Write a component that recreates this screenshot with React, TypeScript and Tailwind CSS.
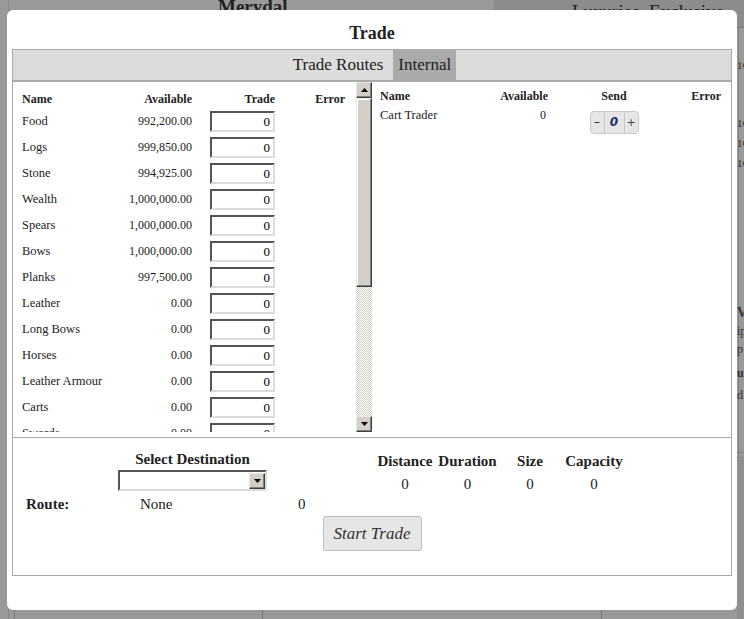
const leftRows: [string, string][] = [
  ["Food", "992,200.00"],
  ["Logs", "999,850.00"],
  ["Stone", "994,925.00"],
  ["Wealth", "1,000,000.00"],
  ["Spears", "1,000,000.00"],
  ["Bows", "1,000,000.00"],
  ["Planks", "997,500.00"],
  ["Leather", "0.00"],
  ["Long Bows", "0.00"],
  ["Horses", "0.00"],
  ["Leather Armour", "0.00"],
  ["Carts", "0.00"],
  ["Swords", "0.00"],
];

function Arrow({ up }: { up?: boolean }) {
  return (
    <svg width="7" height="4" viewBox="0 0 7 4">
      <path d={up ? "M3.5 0L7 4H0Z" : "M0 0H7L3.5 4Z"} fill="#000" />
    </svg>
  );
}

function ScrollButton({ up }: { up?: boolean }) {
  return (
    <div className="w-[16px] h-[16px] shrink-0 bg-[#d4d0c8] border border-t-[#e8e8e8] border-l-[#e8e8e8] border-r-[#404040] border-b-[#404040] shadow-[inset_-1px_-1px_#808080] flex items-center justify-center">
      <Arrow up={up} />
    </div>
  );
}

function TradeInput() {
  return (
    <div className="w-[65px] h-[21px] bg-white border-2 border-t-[#555] border-l-[#555] border-b-[#dcdcdc] border-r-[#dcdcdc] text-right pr-[3px] text-[13px] leading-[17px] text-black">
      0
    </div>
  );
}

export default function App() {
  return (
    <div className="relative w-[744px] h-[619px] overflow-hidden bg-[#999] font-['Liberation_Serif',serif] text-[#222]">
      {/* page behind the dialog */}
      <div className="absolute left-[494px] top-0 w-[250px] h-[28px] bg-[#8c8c8c] border-b border-[#777]" />
      <div className="absolute left-[8px] top-0 w-px h-[619px] bg-[#888]" />
      <div className="absolute left-[218px] top-[-3px] text-[19px] leading-[19px] font-bold">Merydal</div>
      <div className="absolute left-[572px] top-[2px] text-[19px] leading-[19px]">Luxuries &nbsp;Exclusive</div>
      <div className="absolute left-[738px] top-[28px] w-px h-[430px] bg-[#808080]" />
      <div className="absolute left-[737px] top-[55px] text-[11px] leading-[20px] text-[#333]">
        <div>1C</div>
        <div className="mt-[38px]">1C</div>
        <div>1C</div>
        <div>1C</div>
      </div>
      <div className="absolute left-[737px] top-[304px] text-[12px] leading-[18px] text-[#333]">
        <div className="font-bold text-[14px]">V</div>
        <div>ip</div>
        <div>p</div>
        <div className="font-bold mt-[6px]">u</div>
        <div className="mt-[4px]">d</div>
      </div>
      <div className="absolute left-[737px] top-[452px] w-[7px] h-[6px] border-y border-[#808080]" />
      <div className="absolute left-[737px] top-[459px] w-[7px] h-[160px] bg-[#8f8f8f]" />
      <div className="absolute left-[14px] top-[610px] w-px h-[9px] bg-[#777]" />
      <div className="absolute left-[262px] top-[610px] w-px h-[9px] bg-[#777]" />
      <div className="absolute left-[601px] top-[610px] w-px h-[9px] bg-[#777]" />

      {/* dialog */}
      <div className="absolute left-[7px] top-[10px] w-[730px] h-[600px] bg-white rounded-[6px] px-[5px]">
        <div className="h-[39px] pt-[11px] text-center text-[18px] font-bold leading-[24px]">Trade</div>

        <div className="h-[527px] border border-[#aaa] flex flex-col">
          {/* tabs */}
          <div className="h-[32px] shrink-0 bg-[#dcdcdc] border-b-2 border-[#aaa] flex justify-center gap-[5px] text-[17px] leading-[30px]">
            <div className="px-[5px]">Trade Routes</div>
            <div className="px-[5px] bg-[#aaa]">Internal</div>
          </div>

          {/* content */}
          <div className="h-[355px] shrink-0 flex">
            <div className="w-[343px] h-[350px] overflow-hidden pl-[9px] pt-[9px]">
              <div className="grid grid-cols-[88px_82px_83px_70px] h-[17px] text-[12px] font-bold leading-[17px]">
                <div>Name</div>
                <div className="text-right">Available</div>
                <div className="text-right">Trade</div>
                <div className="text-right">Error</div>
              </div>
              {leftRows.map(([name, avail]) => (
                <div key={name} className="grid grid-cols-[88px_82px_83px_70px] h-[26px] items-center leading-[17px]">
                  <div className="text-[12.5px] pt-px">{name}</div>
                  <div className="text-right text-[12px] pt-px">{avail}</div>
                  <div className="flex justify-end">
                    <TradeInput />
                  </div>
                  <div />
                </div>
              ))}
            </div>

            {/* scrollbar */}
            <div className="w-[16px] h-[350px] flex flex-col">
              <ScrollButton up />
              <div className="h-[189px] shrink-0 bg-[#d4d0c8] border border-t-[#e8e8e8] border-l-[#e8e8e8] border-r-[#404040] border-b-[#404040] shadow-[inset_-1px_-1px_#808080,inset_1px_1px_#fff]" />
              <div className="flex-1 bg-[image:repeating-conic-gradient(#d4d0c8_0_25%,#ffffff_0_50%)] bg-[length:2px_2px]" />
              <ScrollButton />
            </div>

            <div className="flex-1 pl-[8px] pr-[10px] pt-[6px]">
              <div className="grid grid-cols-[90px_78px_132px_1fr] h-[17px] text-[12px] font-bold leading-[17px]">
                <div>Name</div>
                <div className="text-right">Available</div>
                <div className="text-center">Send</div>
                <div className="text-right">Error</div>
              </div>
              <div className="grid grid-cols-[90px_78px_132px_1fr] items-start leading-[17px]">
                <div className="mt-[2px] text-[12.5px]">Cart Trader</div>
                <div className="mt-[2px] text-right pr-[2px] text-[12px]">0</div>
                <div className="flex justify-center mt-[6px]">
                  <div className="flex h-[23px] rounded-[4px] border border-[#c8c8c8] bg-[#e6e6e6] font-['DejaVu_Sans',sans-serif] text-[12px] leading-[21px]">
                    <div className="w-[14px] text-center border-r border-[#c8c8c8]">–</div>
                    <div className="w-[20px] text-center border-r border-[#c8c8c8] italic font-bold text-[#1c2f6e]">0</div>
                    <div className="w-[13px] text-center text-[11px] text-[#444]">+</div>
                  </div>
                </div>
                <div />
              </div>
            </div>
          </div>

          {/* destination */}
          <div className="flex-1 border-t border-[#aaa] flex flex-col">
            <div className="flex">
              <div className="w-[359px] flex flex-col items-center pt-[13px]">
                <div className="text-[15px] font-bold leading-[17px]">Select Destination</div>
                <div className="mt-[2px] w-[149px] h-[21px] bg-white border-2 border-t-[#555] border-l-[#555] border-b-[#dcdcdc] border-r-[#dcdcdc] flex justify-end items-center">
                  <div className="w-[16px] h-[16px] bg-[#d4d0c8] border border-t-[#e8e8e8] border-l-[#e8e8e8] border-r-[#404040] border-b-[#404040] shadow-[inset_-1px_-1px_#808080] flex items-center justify-center">
                    <Arrow />
                  </div>
                </div>
              </div>
              <div className="pl-[1px] pt-[15px] text-[15px] leading-[17px]">
                <div className="grid grid-cols-[64px_61px_64px_64px] text-center font-bold">
                  <div>Distance</div>
                  <div>Duration</div>
                  <div>Size</div>
                  <div>Capacity</div>
                </div>
                <div className="mt-[6px] grid grid-cols-[64px_61px_64px_64px] text-center">
                  <div>0</div>
                  <div>0</div>
                  <div>0</div>
                  <div>0</div>
                </div>
              </div>
            </div>

            <div className="mt-[3px] h-[17px] flex pl-[13px] text-[15px] leading-[17px]">
              <div className="w-[114px] font-bold">Route:</div>
              <div className="w-[158px]">None</div>
              <div>0</div>
            </div>

            <div className="mt-[3px] flex justify-center">
              <button className="w-[99px] h-[35px] bg-[#e6e6e6] border border-[#bdbdbd] rounded-[3px] italic text-[17px] text-[#333]">
                Start Trade
              </button>
            </div>
          </div>
        </div>
      </div>
    </div>
  );
}
